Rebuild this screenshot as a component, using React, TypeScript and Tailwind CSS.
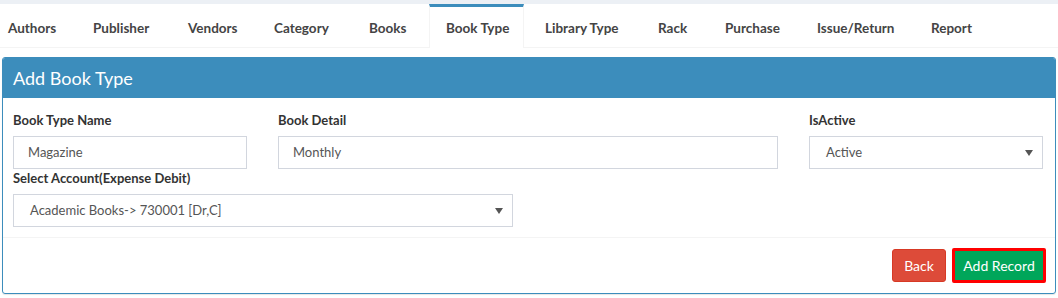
import React from "react";

const tabs: { label: string; w: string; active?: boolean }[] = [
  { label: "Authors", w: "w-[80px]" },
  { label: "Publisher", w: "w-[90px]" },
  { label: "Vendors", w: "w-[81px]" },
  { label: "Category", w: "w-[90px]" },
  { label: "Books", w: "w-[71px]" },
  { label: "Book Type", w: "w-[95px]", active: true },
  { label: "Library Type", w: "w-[108px]" },
  { label: "Rack", w: "w-[62px]" },
  { label: "Purchase", w: "w-[87px]" },
  { label: "Issue/Return", w: "w-[109px]" },
  { label: "Report", w: "w-[80px]" },
];

function Caret() {
  return (
    <svg width="8" height="6" viewBox="0 0 8 6" className="shrink-0">
      <path d="M0 0 L8 0 L4 6 Z" fill="#555" />
    </svg>
  );
}

function Field({
  label,
  value,
  width,
  select,
}: {
  label: string;
  value: string;
  width: string;
  select?: boolean;
}) {
  return (
    <div className={`flex flex-col ${width}`}>
      <label className="h-[18px] text-[13px] leading-[18px] font-bold text-[#333]">
        {label}
      </label>
      <div
        className={`mt-[7px] flex h-[33px] items-center justify-between border border-[#d2d6de] bg-white pr-[9px] text-[13px] text-[#555] ${
          select ? "pl-[16px]" : "pl-[14px]"
        }`}
      >
        <span>{value}</span>
        {select && <Caret />}
      </div>
    </div>
  );
}

export default function App() {
  return (
    <div
      className="h-[298px] w-[1058px] overflow-hidden bg-[#ecf0f5] pt-[4px]"
      style={{ fontFamily: "Lato, 'Liberation Sans', sans-serif" }}
    >
      <div className="bg-white">
        <div className="flex h-[44px] border-b border-[#f4f4f4] pl-0">
          <div className="ml-[-8px] flex gap-[5px]">
            {tabs.map((t) => (
              <div
                key={t.label}
                className={`flex items-center border-t-[3px] pl-[16px] pt-[2px] text-[13.5px] font-bold text-[#444] ${t.w} ${
                  t.active
                    ? "-mb-px border-x border-x-[#f4f4f4] border-t-[#3c8dbc] bg-white pb-px"
                    : "border-t-transparent"
                }`}
              >
                {t.label}
              </div>
            ))}
          </div>
        </div>

        <div className="px-[2px] pb-[6px] pt-[9px]">
          <div className="overflow-hidden rounded-[3px] border border-[#3c8dbc] shadow-[0_1px_1px_rgba(0,0,0,0.1)]">
            <div className="flex h-[40px] items-center bg-[#3c8dbc] px-[10px] text-[18px] text-white">
              Add Book Type
            </div>
            <div className="px-[10px] pb-[10px] pt-[13px]">
              <div className="flex gap-[31px]">
                <Field label="Book Type Name" value="Magazine" width="w-[234px]" />
                <Field label="Book Detail" value="Monthly" width="w-[500px]" />
                <Field label="IsActive" value="Active" width="w-[234px]" select />
              </div>
              <div>
                <Field
                  label="Select Account(Expense Debit)"
                  value="Academic Books-> 730001 [Dr,C]"
                  width="w-[500px]"
                  select
                />
              </div>
            </div>
            <div className="flex justify-end gap-[6px] border-t border-[#f4f4f4] px-[9px] pb-[10px] pt-[10px]">
              <button className="mt-[1px] h-[33px] w-[54px] rounded-[3px] border border-[#d73925] bg-[#dd4b39] text-[14px] text-white">
                Back
              </button>
              <button className="h-[35px] w-[94px] rounded-[2px] border-[3px] border-[#ff0000] bg-[#00a65a] text-[14px] text-white">
                Add Record
              </button>
            </div>
          </div>
        </div>
      </div>
    </div>
  );
}
